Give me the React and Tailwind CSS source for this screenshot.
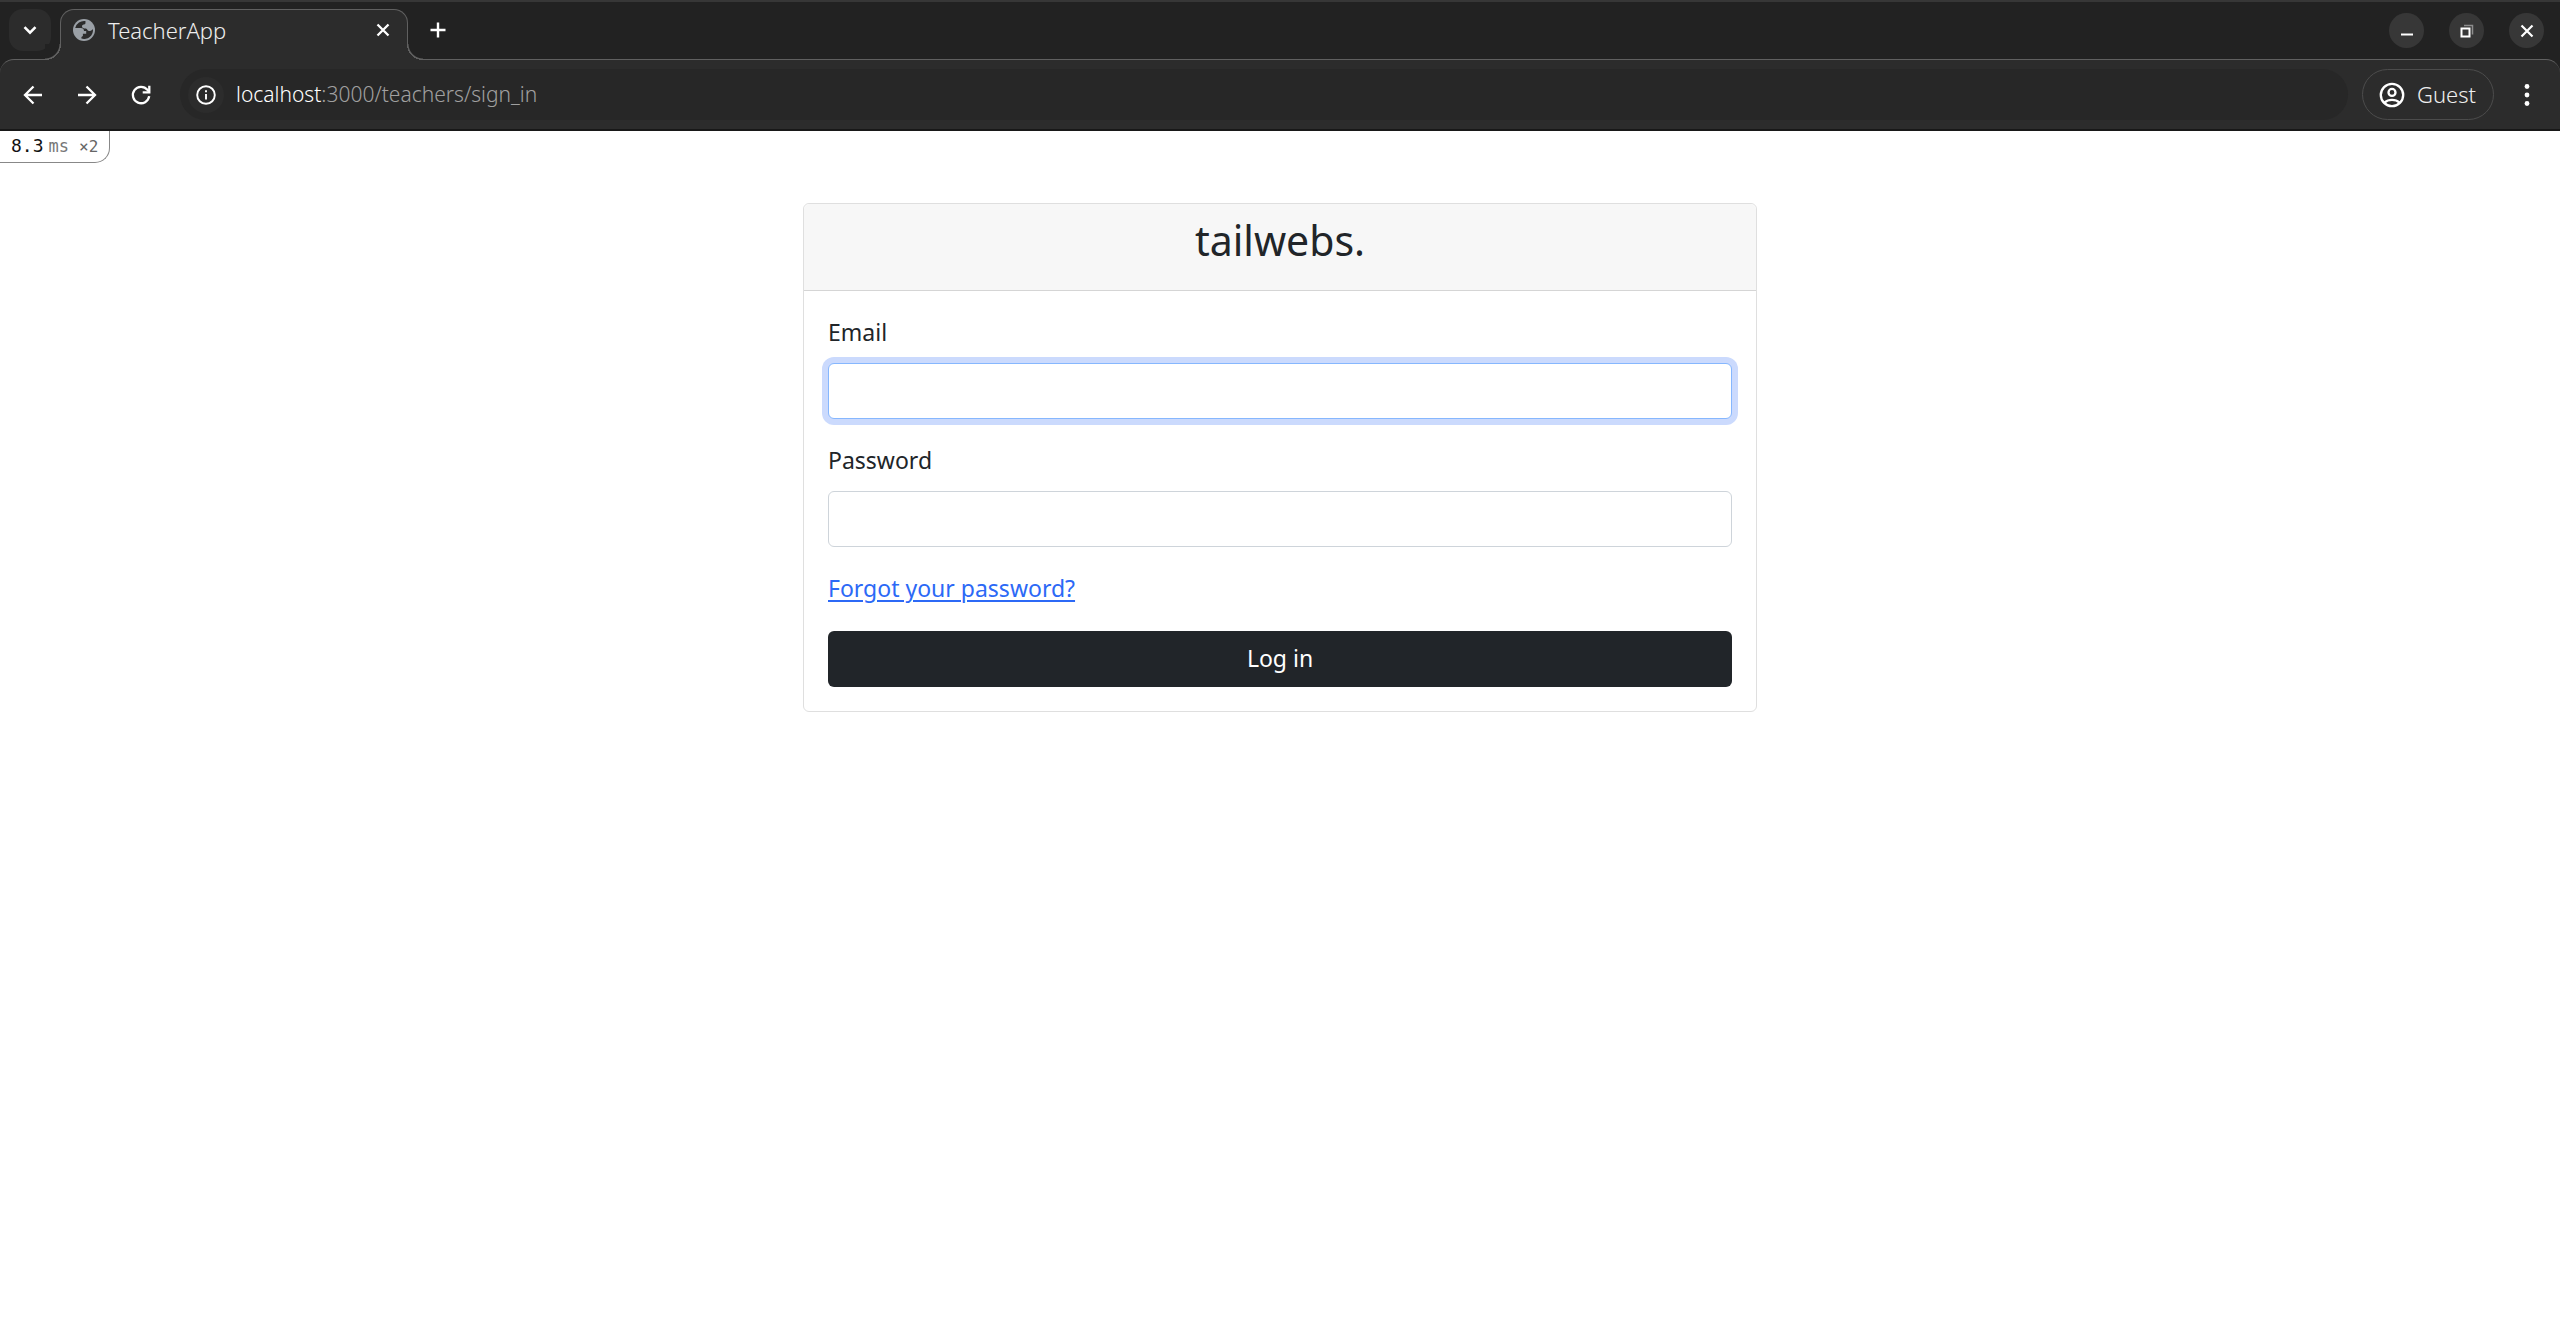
import React from "react";

function Icon({ size = 24, className = "", children }) {
  return (
    <svg
      width={size}
      height={size}
      viewBox="0 0 24 24"
      fill="none"
      stroke="currentColor"
      strokeWidth="2"
      className={"shrink-0 " + className}
      aria-hidden="true"
    >
      {children}
    </svg>
  );
}

function GlobeIcon() {
  return (
    <Icon size={22} className="text-[#9aa0a6]">
      <circle cx="12" cy="12" r="12" fill="currentColor" stroke="none" />
      <path
        fill="#2c2c2c"
        stroke="none"
        d="M13.600 2.200A9.900 9.900 0 0 0 2.400 9.800H8.600c2.200 0 3.400 1.300 3.400 3.200h2.400v3h-3.600v2.600l-1.600.9v1.900A9.900 9.900 0 0 0 21.800 11c-1.400 1.500-2.500 2.200-4.300 2.200-1.600 0-1.700-2.700-3.500-2.900-2.200-.2-4.200-.2-4.200-2.500 0-2 3.800-1.500 3.800-3.200Z"
      />
    </Icon>
  );
}

function WindowButton({ label, children }) {
  return (
    <button
      type="button"
      aria-label={label}
      className="flex size-[35px] items-center justify-center rounded-full bg-[#373737] text-white"
    >
      {children}
    </button>
  );
}

function TabStrip() {
  return (
    <div className="flex h-[59px] items-start justify-between border-t-2 border-[#373737] pr-4">
      <div className="flex h-full items-start">
        <button
          type="button"
          aria-label="Search tabs"
          className="mt-[7px] mr-[9px] ml-[9px] flex size-[42px] items-center justify-center rounded-[14px] bg-[#2c2c2c] text-white"
        >
          <Icon size={24}>
            <path d="M6.500 9.200 12 14.700l5.500-5.500" strokeWidth="2.600" />
          </Icon>
        </button>
        <div className="relative z-10 mt-[7px] -mb-px flex h-[51px] w-[348px] items-center rounded-t-[14px] border border-b-0 border-[#606060] bg-[#2c2c2c] px-3 pb-[11px]">
          <span className="absolute bottom-0 -left-4 size-4 bg-[radial-gradient(circle_at_0_0,#222222_14px,#606060_15px,#606060_16px,#2c2c2c_16px)]" />
          <span className="absolute -right-4 bottom-0 size-4 bg-[radial-gradient(circle_at_100%_0,#222222_14px,#606060_15px,#606060_16px,#2c2c2c_16px)]" />
          <GlobeIcon />
          <span className="ml-[13px] flex-1 text-[22px] leading-8 font-[350] text-[#eeeeee]">TeacherApp</span>
          <button type="button" aria-label="Close tab" className="flex size-6 items-center justify-center text-white">
            <Icon size={24}>
              <path d="m6.500 6.500 11 11m0-11-11 11" strokeWidth="2.300" />
            </Icon>
          </button>
        </div>
        <button
          type="button"
          aria-label="New tab"
          className="mt-[16px] ml-[18px] flex size-6 items-center justify-center text-white"
        >
          <Icon size={24}>
            <path d="M12 4.500v15M4.500 12h15" strokeWidth="2.400" />
          </Icon>
        </button>
      </div>
      <div className="mt-[11px] flex gap-[25px]">
        <WindowButton label="Minimize">
          <Icon size={24}>
            <path d="M6 15.500h12" />
          </Icon>
        </WindowButton>
        <WindowButton label="Restore">
          <Icon size={24}>
            <path d="M6.500 9.500h8v8h-8z" />
            <path d="M9 6.500h8.500v9" className="text-[#8c8c8c]" stroke="currentColor" strokeWidth="1.500" />
          </Icon>
        </WindowButton>
        <WindowButton label="Close">
          <Icon size={24}>
            <path d="m6.500 6.500 11 11m0-11-11 11" strokeWidth="2.200" />
          </Icon>
        </WindowButton>
      </div>
    </div>
  );
}

function Toolbar() {
  return (
    <div className="flex h-[72px] items-center rounded-t-[14px] border-t border-b-2 border-t-[#606060] border-b-[#181818] bg-[#2c2c2c] px-[21px] text-white">
      <nav aria-label="Browser navigation" className="flex gap-[30px]">
        <button type="button" aria-label="Back">
          <Icon size={24}>
            <path d="M21 12H4.500M12.500 3.500 4 12l8.500 8.500" strokeWidth="2.300" />
          </Icon>
        </button>
        <button type="button" aria-label="Forward">
          <Icon size={24}>
            <path d="M3 12h16.500M11.500 3.500 20 12l-8.500 8.500" strokeWidth="2.300" />
          </Icon>
        </button>
        <button type="button" aria-label="Reload">
          <Icon size={24}>
            <path d="M20.200 13.200A8.200 8.200 0 1 1 18.400 6.800L20 8.400" strokeWidth="2.300" />
            <path d="M20.300 2.800v6.600h-6.600" strokeWidth="2.300" />
          </Icon>
        </button>
      </nav>
      <div className="ml-[27px] flex h-[51px] flex-1 items-center rounded-full bg-[#272727] pl-2">
        <button
          type="button"
          aria-label="View site information"
          className="flex size-9 items-center justify-center rounded-full bg-[#2c2c2c]"
        >
          <Icon size={22}>
            <circle cx="12" cy="12" r="9.600" strokeWidth="2.100" />
            <path d="M12 11v6M12 6.800v2.200" strokeWidth="2.100" />
          </Icon>
        </button>
        <p className="ml-3 pb-px text-[21px] leading-8 font-light text-[#a0a0a0]">
          <span className="font-[350] text-white">localhost</span>:3000/teachers/sign_in
        </p>
      </div>
      <button
        type="button"
        className="ml-[14px] flex h-[51px] items-center gap-[11px] rounded-full border border-[#4c4c4c] pr-[17px] pl-[15px] text-[22px] font-[350] text-[#eeeeee]"
      >
        <Icon size={28} className="text-white">
          <circle cx="12" cy="12" r="9.600" />
          <circle cx="12" cy="9.800" r="3" />
          <path d="M5.500 18.600c3.500-3.200 9.500-3.200 13 0" />
        </Icon>
        Guest
      </button>
      <button type="button" aria-label="Browser menu" className="ml-[21px]">
        <Icon size={24}>
          <g fill="currentColor" stroke="none">
            <circle cx="12" cy="3.500" r="2.400" />
            <circle cx="12" cy="12" r="2.400" />
            <circle cx="12" cy="20.500" r="2.400" />
          </g>
        </Icon>
      </button>
    </div>
  );
}

function Field({ id, label, ...input }) {
  return (
    <div className="mb-6">
      <label htmlFor={id} className="mb-[14px] block leading-[34px]">
        {label}
      </label>
      <input
        id={id}
        className="block h-14 w-full rounded-md border border-[#ced4da] bg-white px-4 outline-none focus:border-[#86b7fe] focus:shadow-[0_0_0_6px_#cbdafd]"
        {...input}
      />
    </div>
  );
}

function LoginCard() {
  return (
    <section className="mx-auto w-full max-w-[954px] rounded-md border border-[#dfdfdf] bg-white">
      <header className="rounded-t-md border-b border-[#d5d5d5] bg-[#f7f7f7] py-3">
        <h2 className="mb-[14px] text-center text-[41px] leading-[48px] font-[450]">tailwebs.</h2>
      </header>
      <form className="p-6">
        <Field id="email" label="Email" type="email" autoFocus />
        <Field id="password" label="Password" type="password" />
        <a
          href="#forgot"
          className="mb-[26px] block w-fit leading-[34px] text-[#2c69f6] underline decoration-2 underline-offset-3"
        >
          Forgot your password?
        </a>
        <button type="submit" className="block h-14 w-full rounded-md bg-[#212529] pb-0.5 text-white">
          Log in
        </button>
      </form>
    </section>
  );
}

export default function App() {
  return (
    <div className="min-h-screen bg-white font-['Noto_Sans',sans-serif]">
      <div className="bg-[#222222]">
        <TabStrip />
        <Toolbar />
      </div>
      <main className="relative px-4 pt-[72px] text-[23px] font-[375] text-[#212529]">
        <button
          type="button"
          className="absolute top-0 left-0 flex h-8 items-baseline rounded-br-[15px] border-r border-b border-[#888888] bg-white px-[11px] font-['DejaVu_Sans_Mono',monospace] text-[18px] leading-[30px] font-normal text-[#111111]"
        >
          8.3
          <span className="ml-[5px] text-[17px] text-[#777777]">ms</span>
          <span className="ml-[10px] text-[16px] text-[#666666]">×2</span>
        </button>
        <LoginCard />
      </main>
    </div>
  );
}
